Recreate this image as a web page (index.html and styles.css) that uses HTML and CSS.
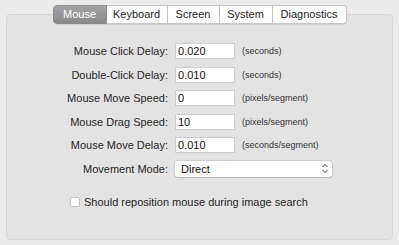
FILE: index.html
```html
<!DOCTYPE html>
<html lang="en">
<head>
    <meta charset="UTF-8">
    <title>Mouse Settings</title>
    <link rel="stylesheet" href="styles.css">
</head>
<body>
    <div class="window">
        <!-- Tab bar -->
        <div class="tabs">
            <div class="tab active tab-mouse">Mouse</div>
            <div class="tab tab-keyboard">Keyboard</div>
            <div class="tab tab-screen">Screen</div>
            <div class="tab tab-system">System</div>
            <div class="tab tab-diag">Diagnostics</div>
        </div>

        <div class="panel">
            <div class="form">
                <label class="label">Mouse Click Delay:</label>
                <div class="field">0.020</div>
                <span class="unit">(seconds)</span>

                <label class="label">Double-Click Delay:</label>
                <div class="field">0.010</div>
                <span class="unit">(seconds)</span>

                <label class="label">Mouse Move Speed:</label>
                <div class="field">0</div>
                <span class="unit">(pixels/segment)</span>

                <label class="label">Mouse Drag Speed:</label>
                <div class="field">10</div>
                <span class="unit">(pixels/segment)</span>

                <label class="label">Mouse Move Delay:</label>
                <div class="field">0.010</div>
                <span class="unit">(seconds/segment)</span>

                <label class="label">Movement Mode:</label>
                <div class="select">
                    <span>Direct</span>
                    <svg width="8" height="11" viewBox="0 0 8 11">
                        <path d="M1.5 4 L4 1.5 L6.5 4 M1.5 7 L4 9.5 L6.5 7" fill="none" stroke="#444" stroke-width="1"/>
                    </svg>
                </div>
            </div>

            <div class="check-row">
                <span class="checkbox"></span>
                <span>Should reposition mouse during image search</span>
            </div>
        </div>
    </div>
</body>
</html>
```

FILE: styles.css
```css
* {
    margin: 0;
    padding: 0;
    box-sizing: border-box;
}

body {
    font-family: 'Liberation Sans', Arial, sans-serif;
    background: #ececec;
    color: #262626;
    width: 399px;
    height: 245px;
    overflow: hidden;
}

.window {
    padding: 5px 6px 0 6px;
}

.tabs {
    position: relative;
    z-index: 1;
    display: flex;
    justify-content: center;
    height: 19px;
}

.tab {
    font-size: 11px;
    line-height: 17px;
    text-align: center;
    background: #ffffff;
    border: 1px solid #c6c6c6;
    border-left: none;
    color: #1e1e1e;
    box-shadow: 0 1px 1px rgba(0, 0, 0, 0.08);
}

.tab-mouse { width: 54px; }
.tab-keyboard { width: 61px; }
.tab-screen { width: 52px; }
.tab-system { width: 53px; }
.tab-diag { width: 74px; }

.tab.active {
    background: linear-gradient(#a3a3a3, #8a8a8a);
    border: 1px solid #8a8a8a;
    color: #ffffff;
    border-radius: 4px 0 0 4px;
}

.tab:last-child {
    border-radius: 0 4px 4px 0;
}

.panel {
    margin-top: -10px;
    height: 226px;
    background: #e3e3e3;
    border: 1px solid #d7d7d7;
    border-radius: 4px;
    padding-top: 28px;
}

.form {
    display: grid;
    grid-template-columns: 161px 60px auto;
    grid-auto-rows: 16px;
    column-gap: 7px;
    row-gap: 7.6px;
    align-items: center;
}

.label {
    text-align: right;
    font-size: 11px;
    color: #262626;
}

.field {
    height: 16px;
    background: #ffffff;
    border: 1px solid #cdcdcd;
    font-size: 11px;
    line-height: 15px;
    padding-left: 2px;
    color: #111;
}

.unit {
    font-size: 9px;
    color: #333;
}

.select {
    grid-column: 2 / 4;
    width: 157px;
    height: 16px;
    background: #ffffff;
    border-radius: 3px;
    box-shadow: 0 0 0 0.5px rgba(0, 0, 0, 0.18), 0 1px 1px rgba(0, 0, 0, 0.12);
    display: flex;
    justify-content: space-between;
    align-items: center;
    padding: 0 3px 0 6px;
    font-size: 11px;
    color: #111;
}

.check-row {
    display: flex;
    align-items: center;
    gap: 4px;
    margin: 19px 0 0 63px;
    font-size: 11px;
    color: #1e1e1e;
}

.checkbox {
    width: 10px;
    height: 10px;
    background: #ffffff;
    border: 1px solid #c2c2c2;
    border-radius: 2px;
}
```
